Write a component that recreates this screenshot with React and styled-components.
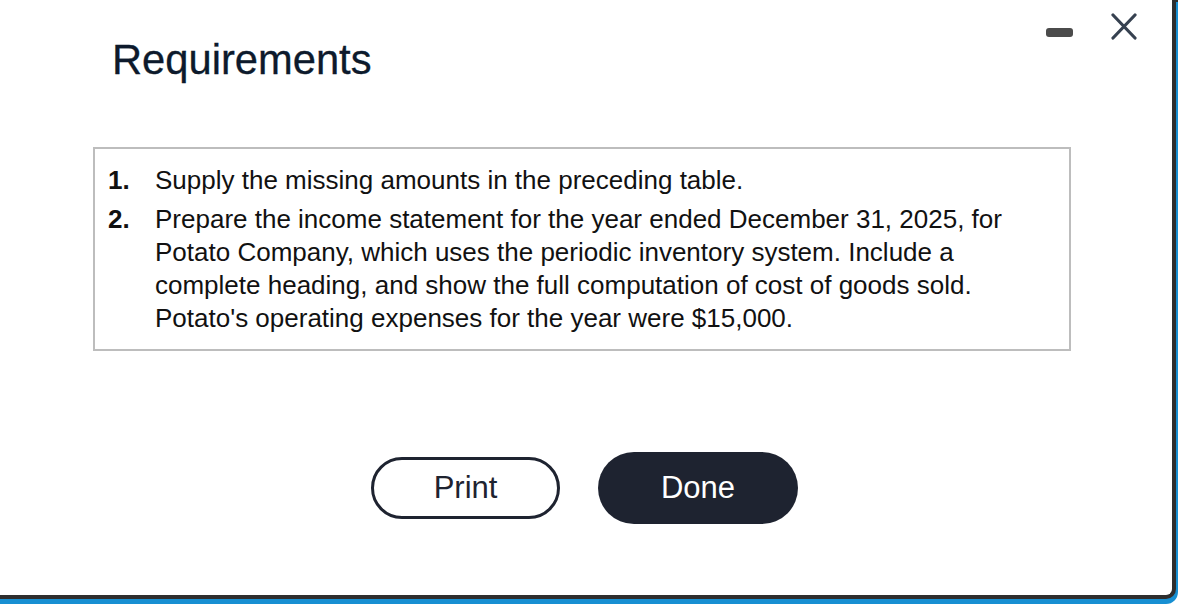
import React from "react";
import styled, { createGlobalStyle } from "styled-components";

const GlobalStyle = createGlobalStyle`
  html, body {
    margin: 0;
    padding: 0;
    background: #ffffff;
  }
  body {
    font-family: "Liberation Sans", Arial, Helvetica, sans-serif;
  }
`;

const Frame = styled.div`
  width: 1178px;
  height: 604px;
  box-sizing: border-box;
  padding: 0 2px 5px 0;
  border-bottom-right-radius: 12px;
  background:
    linear-gradient(#178fd2, #178fd2) 0 2px / 100% 100% no-repeat,
    repeating-linear-gradient(90deg, #2e2e2e 0 2px, #178fd2 2px 4px);
`;

const Dialog = styled.section`
  height: 100%;
  box-sizing: border-box;
  background: #ffffff;
  border-right: 4px solid #2e2e2e;
  border-bottom: 4px solid #2e2e2e;
  border-bottom-right-radius: 10px;
`;

const Header = styled.header`
  display: flex;
  justify-content: space-between;
  align-items: flex-start;
  padding: 13px 35px 0 112px;
`;

const Title = styled.h1`
  margin: 23px 0 0;
  font-size: 41.7px;
  font-weight: 400;
  line-height: 48px;
  color: #0d1a2c;
  -webkit-text-stroke: 0.3px #0d1a2c;
`;

const Controls = styled.div`
  display: flex;
  align-items: flex-start;
  gap: 38px;
`;

const Minimize = styled.button`
  width: 27px;
  height: 9px;
  margin-top: 15px;
  padding: 0;
  border: none;
  border-radius: 3px;
  background: #4b4b4b;
`;

const Close = styled.button`
  display: flex;
  width: 26px;
  height: 27px;
  padding: 0;
  border: none;
  background: none;
`;

const Body = styled.div`
  padding: 63px 0 0 93px;
  width: 978px;
`;

const Box = styled.div`
  border: 2px solid #bdbdbd;
  padding: 15px 0 14px;
`;

const List = styled.ol`
  display: flex;
  flex-direction: column;
  gap: 6px;
  margin: 0;
  padding: 0 37px 0 13px;
  list-style: none;
`;

const Item = styled.li`
  display: grid;
  grid-template-columns: 47px 1fr;
  font-size: 26px;
  line-height: 33px;
  color: #111111;
`;

const Num = styled.span`
  font-weight: 700;
`;

const Buttons = styled.div`
  display: flex;
  justify-content: center;
  align-items: center;
  gap: 38px;
  margin-top: 101px;
  padding-left: 5px;
`;

const Pill = styled.button`
  box-sizing: border-box;
  width: ${(p) => (p.primary ? "200px" : "189px")};
  height: ${(p) => (p.primary ? "72px" : "62px")};
  border: ${(p) => (p.primary ? "none" : "3px solid #1e2330")};
  border-radius: 40px;
  background: ${(p) => (p.primary ? "#1e2330" : "#ffffff")};
  color: ${(p) => (p.primary ? "#ffffff" : "#1e2330")};
  font-family: "Liberation Sans", Arial, sans-serif;
  font-size: 31px;
  padding: 0;
`;

const items = [
  "Supply the missing amounts in the preceding table.",
  "Prepare the income statement for the year ended December 31, 2025, for Potato Company, which uses the periodic inventory system. Include a complete heading, and show the full computation of cost of goods sold. Potato's operating expenses for the year were $15,000.",
];

const App = () => {
  return (
    <>
      <GlobalStyle />
      <Frame>
        <Dialog>
          <Header>
            <Title>Requirements</Title>
            <Controls>
              <Minimize aria-label="Minimize" />
              <Close aria-label="Close">
                <svg width="26" height="27" viewBox="0 0 26 27">
                  <path
                    d="M2 2 L24 25 M24 2 L2 25"
                    stroke="#364150"
                    strokeWidth="3.2"
                    strokeLinecap="round"
                    fill="none"
                  />
                </svg>
              </Close>
            </Controls>
          </Header>

          <Body>
            <Box>
              <List>
                {items.map((text, i) => (
                  <Item key={i}>
                    <Num>{i + 1}.</Num>
                    <span>{text}</span>
                  </Item>
                ))}
              </List>
            </Box>

            <Buttons>
              <Pill>Print</Pill>
              <Pill primary>Done</Pill>
            </Buttons>
          </Body>
        </Dialog>
      </Frame>
    </>
  );
};

export default App;
